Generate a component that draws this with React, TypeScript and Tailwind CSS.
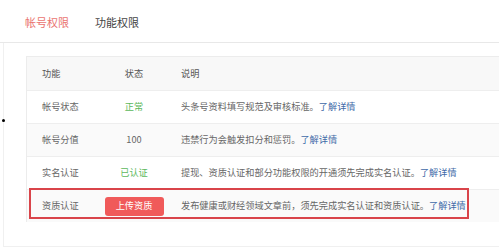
import React from 'react';

const rows = [
  { name: '帐号状态', status: '正常', statusType: 'green', desc: '头条号资料填写规范及审核标准。' },
  { name: '帐号分值', status: '100', statusType: 'plain', desc: '违禁行为会触发扣分和惩罚。' },
  { name: '实名认证', status: '已认证', statusType: 'green', desc: '提现、资质认证和部分功能权限的开通须先完成实名认证。' },
  { name: '资质认证', status: '上传资质', statusType: 'button', desc: '发布健康或财经领域文章前，须先完成实名认证和资质认证。' },
];

export default function App() {
  return (
    <div
      className="relative w-[499px] h-[249px] overflow-hidden bg-white text-[#666]"
      style={{ fontFamily: '"Noto Sans CJK SC", "Liberation Sans", sans-serif' }}
    >
      {/* tabs */}
      <div className="flex h-[43px] items-center gap-[26px] border-b border-[#e8e8e8] pl-[25px] pt-[2px] text-[11px]">
        <span className="text-[#ea7470]">帐号权限</span>
        <span className="text-[#444]">功能权限</span>
      </div>

      <div className="h-[204px] border-b border-l border-[#f0f0f0] ml-[3px] pl-[22px] pt-[13px]">
        <div className="border-l border-t border-[#ececec] text-[9.2px]">
          <div className="grid h-[33px] grid-cols-[76px_62px_1fr] items-center bg-[#f8f8f8] text-[#555]">
            <span className="pl-[15px]">功能</span>
            <span className="text-center">状态</span>
            <span className="pl-[16px]">说明</span>
          </div>
          {rows.map((r, i) => (
            <div
              key={r.name}
              className={`grid h-[33px] grid-cols-[76px_62px_1fr] items-center border-t border-[#eeeeee] ${
                i % 2 === 1 ? 'bg-[#fafafa]' : 'bg-white'
              }`}
            >
              <span className="pl-[15px]">{r.name}</span>
              <span className="flex justify-center">
                {r.statusType === 'button' ? (
                  <span className="flex h-[19px] w-[59px] items-center justify-center rounded-[3px] bg-[#f05a5a] text-white">
                    {r.status}
                  </span>
                ) : (
                  <span className={r.statusType === 'green' ? 'text-[#5cb85c]' : ''}>{r.status}</span>
                )}
              </span>
              <span className="whitespace-nowrap pl-[16px]">
                {r.desc}
                <span className="text-[#3f6aa8]">了解详情</span>
              </span>
            </div>
          ))}
        </div>
      </div>

      {/* annotation overlays */}
      <div className="absolute left-[29px] top-[188px] h-[31px] w-[440px] border-2 border-[#d9444a]" />
      <div className="absolute left-[2px] top-[119px] h-[3px] w-[3px] rounded-full bg-black" />
    </div>
  );
}
